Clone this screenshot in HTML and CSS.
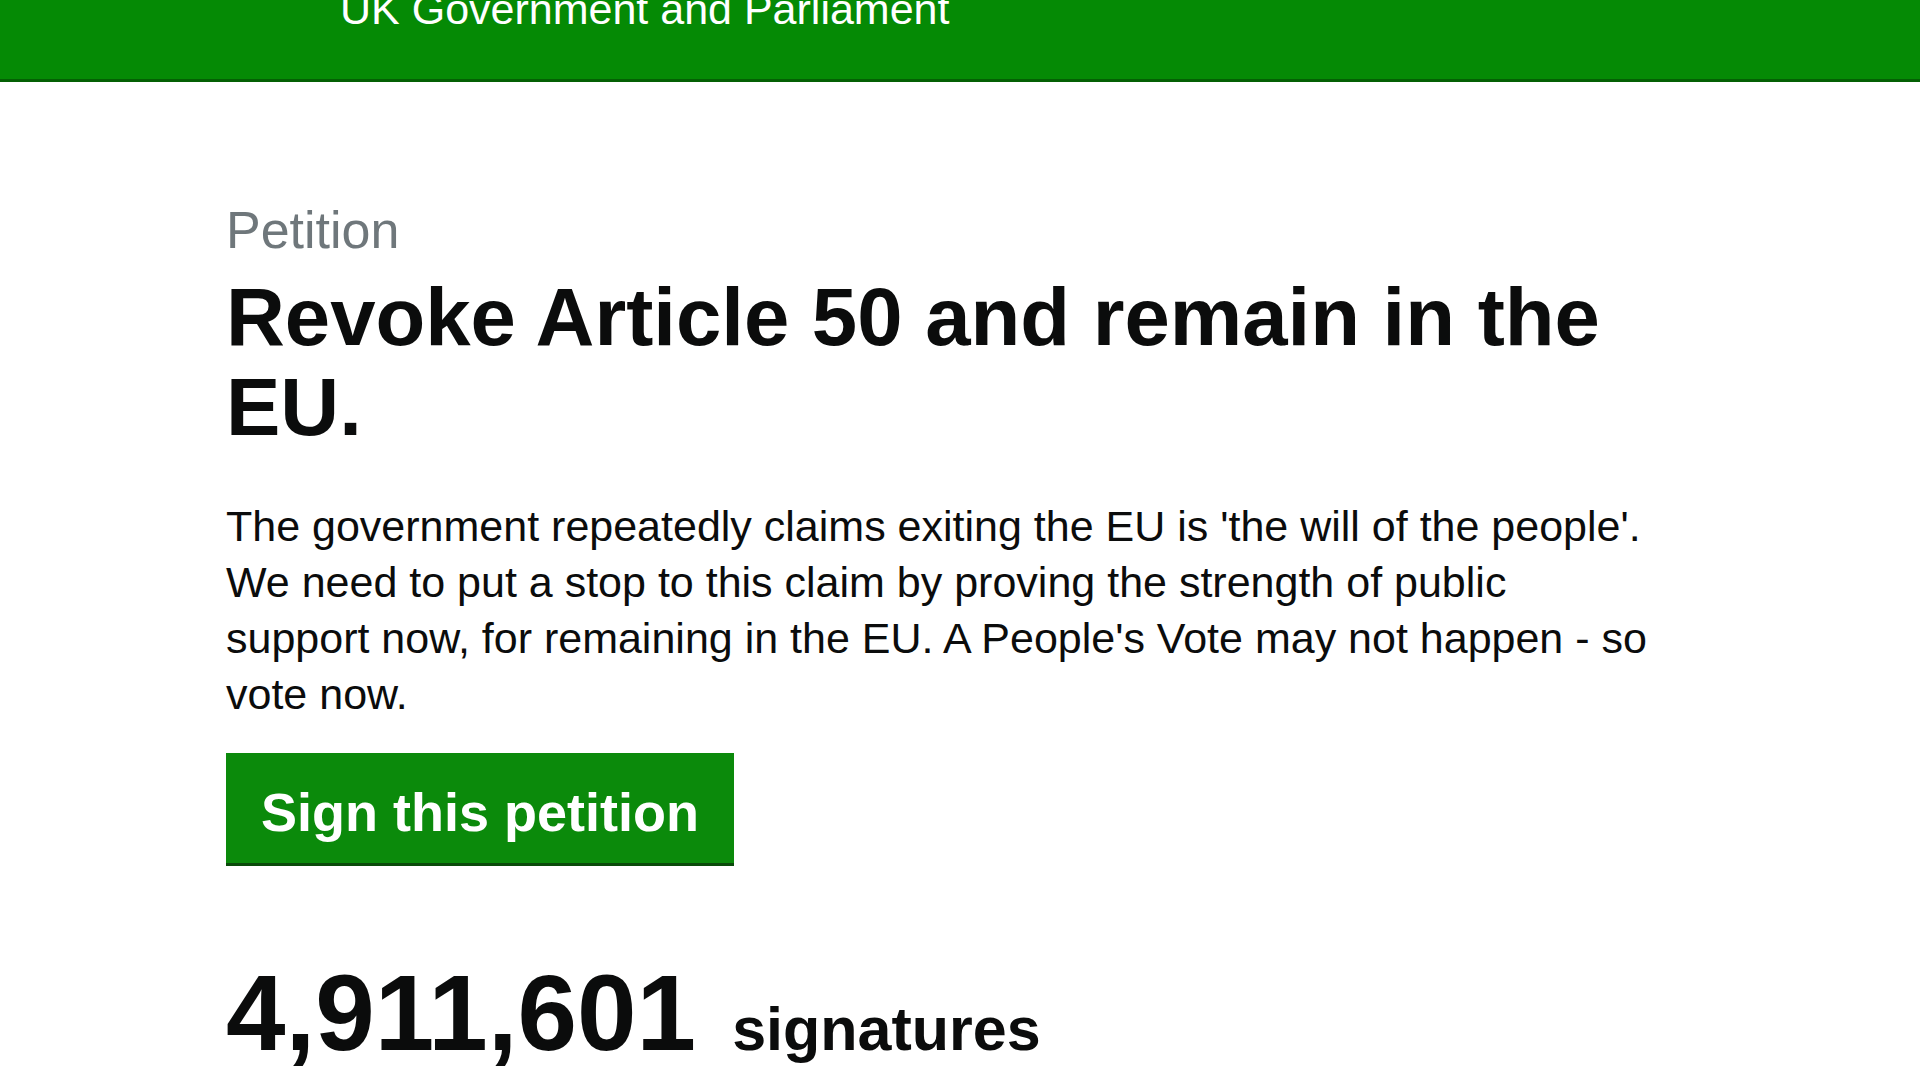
FILE: index.html
```html
<!DOCTYPE html>
<html lang="en">
<head>
    <meta charset="UTF-8">
    <meta name="viewport" content="width=device-width, initial-scale=1.0">
    <title>Revoke Article 50 and remain in the EU. - Petitions</title>
    <link rel="stylesheet" href="styles.css">
</head>
<body>
    <header class="site-header">
        <div class="site-title">UK Government and Parliament</div>
    </header>

    <main class="petition">
        <span class="petition-label">Petition</span>
        <h1 class="petition-title">Revoke Article 50 and remain in the EU.</h1>
        <p class="petition-action">The government repeatedly claims exiting the EU is 'the will of the people'. We need to put a stop to this claim by proving the strength of public support now, for remaining in the EU. A People's Vote may not happen - so vote now.</p>

        <a href="#" class="button">Sign this petition</a>

        <div class="signature-count">
            <span class="count">4,911,601</span>
            <span class="count-label">signatures</span>
        </div>
    </main>
</body>
</html>
```

FILE: styles.css
```css
body {
    margin: 0;
    font-family: "Liberation Sans", Arial, sans-serif;
    background-color: white;
    color: #0b0c0c;
    overflow: hidden;
}

.site-header {
    background-color: #058a05;
    height: 79px;
    border-bottom: 3px solid #046004;
    padding-left: 340px;
    overflow: hidden;
}

.site-title {
    color: white;
    font-size: 43px;
    line-height: 48px;
    margin-top: -15px;
}

.petition {
    padding: 118px 0 0 226px;
    width: 1433px;
}

.petition-label {
    display: block;
    color: #6f777b;
    font-size: 52px;
    line-height: 60px;
}

.petition-title {
    font-size: 81.5px;
    line-height: 90px;
    font-weight: bold;
    margin: 12px 0 0;
}

.petition-action {
    font-size: 43px;
    line-height: 56px;
    margin: 46px 0 0;
}

.button {
    display: inline-block;
    margin-top: 31px;
    background-color: #0b8a0b;
    color: white;
    font-size: 54px;
    line-height: 62px;
    font-weight: bold;
    text-decoration: none;
    padding: 28px 35px 20px;
    box-shadow: 0 3px 0 #0a4a0a;
}

.signature-count {
    display: flex;
    align-items: baseline;
    gap: 36px;
    margin-top: 97px;
    font-weight: bold;
}

.count {
    font-size: 107px;
    line-height: 106px;
}

.count-label {
    font-size: 61px;
}
```
